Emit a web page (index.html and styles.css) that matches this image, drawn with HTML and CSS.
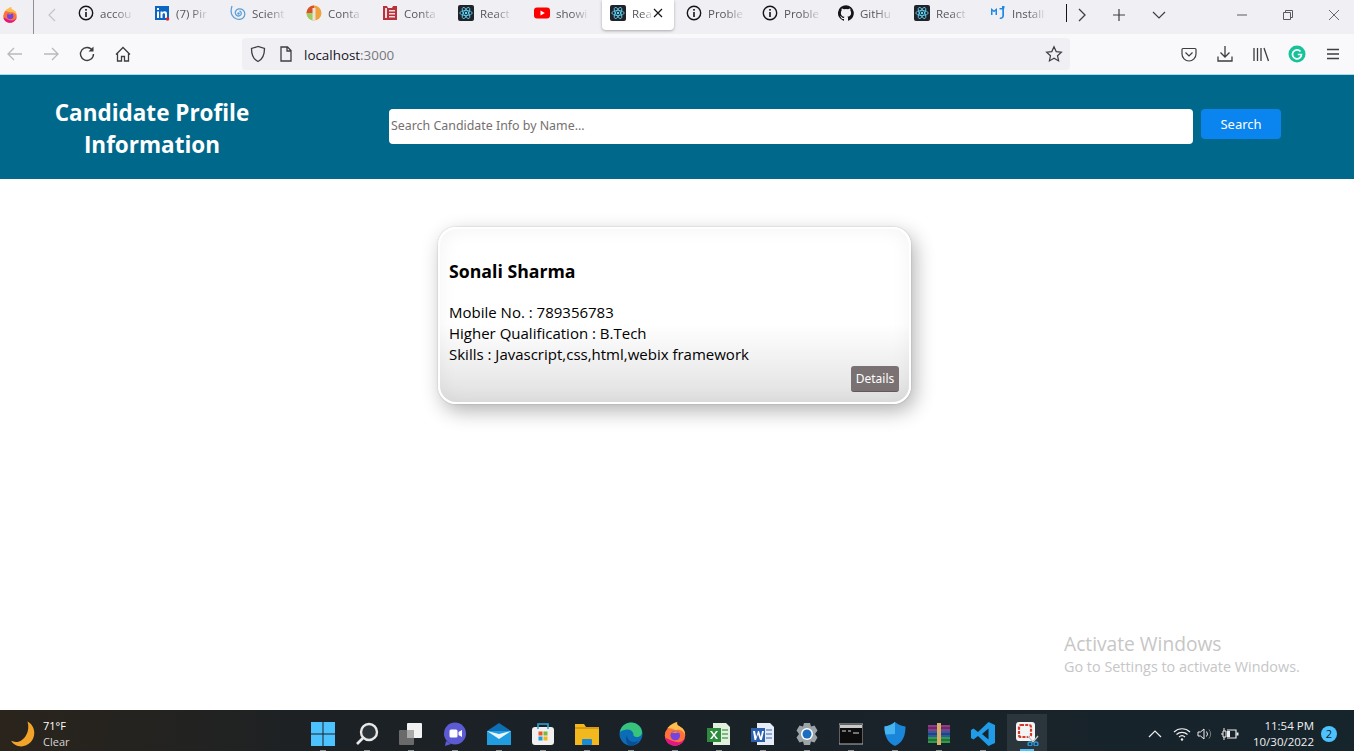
FILE: index.html
```html
<!DOCTYPE html>
<html lang="en">
<head>
<meta charset="UTF-8">
<meta name="viewport" content="width=device-width, initial-scale=1.0">
<title>Candidate Profile Information</title>
<link rel="stylesheet" href="styles.css">
</head>
<body>
<svg class="defs" width="0" height="0">
  <symbol id="i-info" viewBox="0 0 16 16"><circle cx="8" cy="8" r="6.7" fill="none" stroke="#15141a" stroke-width="1.4"/><rect x="7.2" y="7" width="1.6" height="5" fill="#15141a"/><rect x="7.2" y="4" width="1.6" height="1.7" fill="#15141a"/></symbol>
  <symbol id="i-react" viewBox="0 0 16 16"><rect width="16" height="16" rx="2" fill="#20232a"/><g fill="none" stroke="#61dafb" stroke-width=".8"><ellipse cx="8" cy="8" rx="6.2" ry="2.5"/><ellipse cx="8" cy="8" rx="6.2" ry="2.5" transform="rotate(60 8 8)"/><ellipse cx="8" cy="8" rx="6.2" ry="2.5" transform="rotate(120 8 8)"/></g><circle cx="8" cy="8" r="1.2" fill="#61dafb"/></symbol>
  <symbol id="i-firefox" viewBox="0 0 16 16"><circle cx="8" cy="9" r="6.8" fill="#ff7139"/><path d="M1.5 10.5C2 14 5 15.8 8 15.8c3.6 0 6.8-3 6.8-6.8 0 3-3 5-6 4.4-2.6-.4-4.6-2-7.3-2.9z" fill="#e31587"/><path d="M3 4C5 1.5 8 .2 9.5 0 9 1.500 10 2.500 12 3.500c2 1 2.800 3 2.800 5.500C14 6 11 4.500 8.500 5.500 6 4.500 4.500 4 3 4z" fill="#ffbd4f"/><circle cx="8.200" cy="9" r="3.200" fill="#7542e5"/><path d="M5.500 7.500c1-1.500 4-2 5.500 0-1-.6-2-.6-2.800 0-1-.4-2-.4-2.700 0z" fill="#ff980e"/></symbol>
  <symbol id="i-edge" viewBox="0 0 24 24"><circle cx="12" cy="12" r="11.500" fill="#0c6cb8"/><path d="M1 10C2 4 7 .5 12 .5c6 0 11 4.500 11 10 0 3-3 5-6 4.500-2-.3-3-1.500-2.500-3C14 9 11 7 7.500 7.500 4.500 8 2 9 1 10z" fill="#37c47a"/><path d="M8 13c0 4 3 7 7 7 2 0 4-.7 5-2-2 4-5 5.500-8 5.500-3 0-5-3-5-6 0-1.700.3-3.500 1-4.500z" fill="#0a4f96"/></symbol>
</svg>

<div class="tabstrip">
  <div class="ff-slot"><svg class="ic16"><use href="#i-firefox"/></svg></div>
  <div class="tab-back"><svg width="10" height="16" viewBox="0 0 10 16"><path d="M8 2 2 8l6 6" fill="none" stroke="#c4c4c8" stroke-width="1.2"/></svg></div>
  <div class="tab"><svg class="ic16"><use href="#i-info"/></svg><span class="tab-text">accou</span></div>
  <div class="tab"><svg class="ic16" viewBox="0 0 16 16"><rect x="1" y="1" width="14" height="14" fill="#0a66c2"/><rect x="3" y="6.500" width="2" height="6.500" fill="#fff"/><rect x="3" y="3" width="2" height="2" fill="#fff"/><path d="M6.500 6.500h2v1c.5-.8 1.300-1.200 2.200-1.200 1.800 0 2.300 1.200 2.300 3V13h-2V9.800c0-.9-.3-1.500-1.200-1.500S8.500 9 8.500 9.800V13h-2z" fill="#fff"/><circle cx="13.500" cy="14" r="1.800" fill="#e0272e"/></svg><span class="tab-text">(7) Pir</span></div>
  <div class="tab"><svg class="ic16" viewBox="0 0 16 16"><g fill="none" stroke="#5b9fd6" stroke-width="1.300"><path d="M2 1c-1 3-1.500 6 0 9 2 4 7 5.500 10.500 3.500 3-1.800 3-6.500.5-8.500C10.500 3 6.500 3.500 5.500 6.500 4.500 9.500 7.500 12 10 10.500c2-1.200 1.500-4-.5-4.500"/></g><circle cx="8.500" cy="8.500" r="1.200" fill="#5b9fd6"/></svg><span class="tab-text">Scient</span></div>
  <div class="tab"><svg class="ic16" viewBox="0 0 16 16"><circle cx="8" cy="8" r="7.500" fill="#f0a23c"/><path d="M8 8V.5A7.500 7.500 0 0 0 .5 8z" fill="#d9512c"/><path d="M8 8H.5A7.500 7.500 0 0 0 8 15.500z" fill="#9ccc65"/><rect x="6.500" y="3" width="3" height="12.500" fill="#e9e4d4"/></svg><span class="tab-text">Conta</span></div>
  <div class="tab"><svg class="ic16" viewBox="0 0 16 16"><path d="M1 1h4l1 2h4l1-2h4v14H1z" fill="#b8323c"/><g fill="#f3d9da"><rect x="3" y="3" width="2" height="10"/><rect x="7" y="5" width="6" height="1.500"/><rect x="7" y="8" width="6" height="1.500"/><rect x="7" y="11" width="6" height="1.500"/></g></svg><span class="tab-text">Conta</span></div>
  <div class="tab"><svg class="ic16"><use href="#i-react"/></svg><span class="tab-text">React</span></div>
  <div class="tab"><svg class="ic16" viewBox="0 0 16 16"><rect y="2.500" width="16" height="11" rx="3" fill="#f00"/><path d="M6.500 5.500v5l4.300-2.500z" fill="#fff"/></svg><span class="tab-text">showi</span></div>
  <div class="tab tab-active"><svg class="ic16"><use href="#i-react"/></svg><span class="tab-text">Rea</span><svg class="tab-close" width="10" height="10" viewBox="0 0 10 10"><path d="M1 1l8 8M9 1 1 9" stroke="#15141a" stroke-width="1.200"/></svg></div>
  <div class="tab"><svg class="ic16"><use href="#i-info"/></svg><span class="tab-text">Proble</span></div>
  <div class="tab"><svg class="ic16"><use href="#i-info"/></svg><span class="tab-text">Proble</span></div>
  <div class="tab"><svg class="ic16" viewBox="0 0 16 16"><path fill="#15141a" d="M8 .2a8 8 0 0 0-2.500 15.600c.4.100.5-.2.500-.4v-1.400c-2.200.5-2.700-1-2.700-1-.4-.9-.9-1.200-.9-1.200-.7-.5.100-.5.100-.5.800.100 1.200.8 1.200.8.700 1.200 1.900.9 2.300.7.100-.5.300-.9.500-1.100-1.800-.2-3.600-.9-3.600-4 0-.9.300-1.600.8-2.100-.1-.2-.4-1 .1-2.100 0 0 .7-.2 2.200.8a7.600 7.600 0 0 1 4 0c1.500-1 2.200-.8 2.200-.8.400 1.100.2 1.900.1 2.100.5.600.8 1.300.8 2.100 0 3.100-1.900 3.700-3.700 3.900.3.300.6.800.6 1.500v2.200c0 .2.100.5.600.4A8 8 0 0 0 8 .2z"/></svg><span class="tab-text">GitHu</span></div>
  <div class="tab"><svg class="ic16"><use href="#i-react"/></svg><span class="tab-text">React</span></div>
  <div class="tab"><svg class="ic16" viewBox="0 0 16 16"><path d="M1 3l3 2.500L7 3v7H5.500V6L4 7.200 2.500 6v4H1z M9.500 3h4.500v7.500c0 2.500-2 4-4.500 3.500l.5-1.500c1.300.2 2.300-.5 2.300-2V4.500H9.500z" fill="#1e88e5"/><rect x="12" y="1" width="2.500" height="2.500" fill="#1e88e5"/></svg><span class="tab-text">Install</span></div>
  <div class="tab-stub"></div>
  <div class="tab-tools">
    <svg width="12" height="16" viewBox="0 0 12 16"><path d="M3 2l6 6-6 6" fill="none" stroke="#3d3d42" stroke-width="1.300"/></svg>
    <svg width="14" height="14" viewBox="0 0 14 14"><path d="M7 1v12M1 7h12" stroke="#3d3d42" stroke-width="1.200"/></svg>
    <svg class="tab-list" width="14" height="10" viewBox="0 0 14 10"><path d="M1 2l6 6 6-6" fill="none" stroke="#3d3d42" stroke-width="1.200"/></svg>
  </div>
  <div class="win-controls">
    <svg width="12" height="12" viewBox="0 0 12 12"><path d="M1 6h10" stroke="#5a5a5e"/></svg>
    <svg width="12" height="12" viewBox="0 0 12 12"><path d="M1.500 3.500h7v7h-7zM3.500 3.500v-2h7v7h-2" fill="none" stroke="#5a5a5e"/></svg>
    <svg width="12" height="12" viewBox="0 0 12 12"><path d="M1 1l10 10M11 1 1 11" stroke="#5a5a5e" stroke-width=".9"/></svg>
  </div>
</div>

<div class="toolbar">
  <div class="nav-icons">
    <svg class="ic18" viewBox="0 0 18 18"><path d="M16 9H2M8 3 2 9l6 6" fill="none" stroke="#b9b9bd" stroke-width="1.300"/></svg>
    <svg class="ic18" viewBox="0 0 18 18"><path d="M2 9h14M10 3l6 6-6 6" fill="none" stroke="#b9b9bd" stroke-width="1.300"/></svg>
    <svg class="ic18" viewBox="0 0 18 18"><path d="M14.500 5.500A6.500 6.500 0 1 0 15.500 9" fill="none" stroke="#3d3d42" stroke-width="1.400"/><path d="M15.500 1.500v5h-5z" fill="#3d3d42"/></svg>
    <svg class="ic18" viewBox="0 0 18 18"><path d="M2 9.500 9 2.500l7 7M3.500 8.500V16h4v-4.500h3V16h4V8.500" fill="none" stroke="#3d3d42" stroke-width="1.300"/></svg>
  </div>
  <div class="urlbar">
    <svg class="ic18" viewBox="0 0 18 18"><path d="M9 1.500 2.500 3.500c0 6 1 10.500 6.500 13 5.500-2.500 6.500-7 6.500-13z" fill="none" stroke="#3d3d42" stroke-width="1.300"/></svg>
    <svg class="page-ic" width="14" height="16" viewBox="0 0 14 16"><path d="M2 1h6.500L12 4.500V15H2zM8 1v4h4" fill="none" stroke="#3d3d42" stroke-width="1.300"/></svg>
    <span class="url-text">localhost<span class="url-port">:3000</span></span>
    <svg class="ic18 url-star" viewBox="0 0 18 18"><path d="M9 1.800l2.200 4.800 5.200.6-3.900 3.500 1.100 5.200L9 13.300l-4.600 2.600 1.100-5.200-3.900-3.500 5.200-.6z" fill="none" stroke="#3d3d42" stroke-width="1.200"/></svg>
  </div>
  <div class="nav-icons right-icons">
    <svg class="ic18" viewBox="0 0 18 18"><path d="M3 3.500h12c.6 0 1 .4 1 1v4.500a7 7 0 0 1-14 0V4.500c0-.6.400-1 1-1z" fill="none" stroke="#3d3d42" stroke-width="1.200"/><path d="M5.500 7.500 9 11l3.500-3.500" fill="none" stroke="#3d3d42" stroke-width="1.200"/></svg>
    <svg class="ic18" viewBox="0 0 18 18"><path d="M9 1v10.500M4.500 7.500 9 12l4.500-4.500M2 11.500V16h14v-4.500" fill="none" stroke="#3d3d42" stroke-width="1.300"/></svg>
    <svg class="ic18" viewBox="0 0 18 18"><path d="M2 3v13M5.500 3v13M9 3v13M12 3l4.500 13" fill="none" stroke="#3d3d42" stroke-width="1.300"/></svg>
    <svg class="ic18" viewBox="0 0 18 18"><circle cx="9" cy="9" r="8.500" fill="#15c39a"/><path d="M12.500 6.500A4.500 4.500 0 1 0 13.500 9.500H9.800" fill="none" stroke="#fff" stroke-width="1.700"/></svg>
    <svg class="ic18" viewBox="0 0 18 18"><path d="M3 4.500h12M3 9h12M3 13.500h12" stroke="#3d3d42" stroke-width="1.300"/></svg>
  </div>
</div>

<header class="page-header">
  <h1 class="page-title">Candidate Profile Information</h1>
  <input class="search-input" type="text" placeholder="Search Candidate Info by Name...">
  <button class="search-btn">Search</button>
</header>

<main class="content">
  <div class="card">
    <h3 class="card-name">Sonali Sharma</h3>
    <div class="card-line">Mobile No. : 789356783</div>
    <div class="card-line">Higher Qualification : B.Tech</div>
    <div class="card-line">Skills : Javascript,css,html,webix framework</div>
    <div class="card-actions"><button class="details-btn">Details</button></div>
  </div>
</main>

<div class="watermark">
  <div class="wm-title">Activate Windows</div>
  <div class="wm-sub">Go to Settings to activate Windows.</div>
</div>

<footer class="taskbar">
  <div class="weather">
    <svg width="26" height="26" viewBox="1 1 22 23"><path d="M16 1.500c3 1.500 6 5 6 10 0 7-5.500 12-11.500 12-4 0-7.500-2-9-5 2 1 4 1.300 6.500.8C14 17.800 18.500 9.500 16 1.500z" fill="#f2a32a"/></svg>
    <div class="weather-text"><div>71°F</div><div class="weather-sub">Clear</div></div>
  </div>
  <div class="task-icons">
    <div class="task-icon"><svg class="ic24" viewBox="0 0 24 24"><g fill="#4cc2ff"><rect x="0" y="0" width="11.500" height="11.500"/><rect x="12.500" y="0" width="11.500" height="11.500"/><rect x="0" y="12.500" width="11.500" height="11.500"/><rect x="12.500" y="12.500" width="11.500" height="11.500"/></g></svg></div>
    <div class="task-icon"><svg class="ic24" viewBox="0 0 24 24"><circle cx="14" cy="10" r="8" fill="#2c3338" stroke="#e8e8e8" stroke-width="2.400"/><path d="M8 16l-6 6" stroke="#e8e8e8" stroke-width="2.600"/></svg></div>
    <div class="task-icon"><svg class="ic24" viewBox="0 0 24 24"><rect x="0" y="8" width="15" height="15" rx="1" fill="#6a6a6a"/><rect x="8" y="1" width="15" height="15" rx="1" fill="#f2f2f2"/><rect x="8" y="8" width="7" height="8" fill="#a9a9a9"/></svg></div>
    <div class="task-icon"><svg class="ic24" viewBox="0 0 24 24"><circle cx="12" cy="11.500" r="11" fill="#5d5bd4"/><path d="M3 19l-1 5 6-2z" fill="#5d5bd4"/><rect x="6.500" y="7.500" width="8" height="8" rx="1.500" fill="#fff"/><path d="M15.500 10l3.500-2v7l-3.500-2z" fill="#fff"/></svg></div>
    <div class="task-icon"><svg class="ic24" viewBox="0 0 24 24"><path d="M0 9 12 1l12 8v14H0z" fill="#0f6fb5"/><path d="M0 9h24v14H0z" fill="#1f9de0"/><path d="M0 9l12 8 12-8-12 3z" fill="#e9f5fc"/></svg></div>
    <div class="task-icon"><svg class="ic24" viewBox="0 0 24 24"><rect x="1" y="5" width="22" height="18" rx="3" fill="#f2f0ee"/><path d="M7 7V2h10v5" fill="none" stroke="#2fa6d9" stroke-width="1.600"/><rect x="7.500" y="9.500" width="4" height="4" fill="#e8562a"/><rect x="12.500" y="9.500" width="4" height="4" fill="#7db83a"/><rect x="7.500" y="14.500" width="4" height="4" fill="#1f9de0"/><rect x="12.500" y="14.500" width="4" height="4" fill="#f5b51e"/></svg></div>
    <div class="task-icon"><svg class="ic24" viewBox="0 0 24 24"><path d="M0 2h9l2 3h13v18H0z" fill="#f2b91f"/><rect x="0" y="5" width="24" height="2" fill="#d99a12"/><rect x="7" y="17" width="10" height="6" rx="1" fill="#1b8ad3"/></svg></div>
    <div class="task-icon"><svg class="ic24"><use href="#i-edge"/></svg></div>
    <div class="task-icon"><svg class="ic24" viewBox="0 0 16 16"><use href="#i-firefox" width="16" height="16"/></svg></div>
    <div class="task-icon"><svg class="ic24" viewBox="0 0 24 24"><path d="M6 1h13l4 4v18H6z" fill="#e3efdd"/><rect x="0" y="6" width="14" height="14" fill="#2e8b3e"/><path d="M3 9l2 0 2 3 2-3h2l-3 4 3 4H9l-2-3-2 3H3l3-4z" fill="#fff"/><path d="M15 8h6M15 12h6M15 16h6" stroke="#5aa867" stroke-width="1.600"/></svg></div>
    <div class="task-icon"><svg class="ic24" viewBox="0 0 24 24"><path d="M6 1h13l4 4v18H6z" fill="#e5ecf7"/><rect x="0" y="6" width="14" height="14" fill="#2a5fb0"/><path d="M2 9h2l1.200 6L7 9h1l1.800 6L11 9h2l-2.200 9H9l-2-6-2 6H3.500z" fill="#fff"/><path d="M15 8h6M15 12h6M15 16h6" stroke="#6d92cc" stroke-width="1.600"/></svg></div>
    <div class="task-icon"><svg class="ic24" viewBox="0 0 24 24"><path d="M9 1h6l1 3.500 3.500-1 3 5-2.500 3.500 2.500 3.500-3 5-3.500-1L15 23H9l-1-3.500-3.500 1-3-5L4 12 1.500 8.500l3-5 3.500 1z" fill="#9ba3a8"/><circle cx="12" cy="12" r="6" fill="#fff"/><circle cx="12" cy="12" r="4.500" fill="#1a6fc0"/></svg></div>
    <div class="task-icon"><svg class="ic24" viewBox="0 0 24 24"><rect y="2" width="24" height="20" fill="#0c0c0c" stroke="#b5b5b5"/><rect x="1" y="3" width="22" height="3" fill="#c9c9c9"/><path d="M3 9h4M9 9h3M14 11h6" stroke="#d8d8d8" stroke-width="1.200"/></svg></div>
    <div class="task-icon"><svg class="ic24" viewBox="0 0 24 24"><path d="M12 0C8 3 5 4 1.500 4.500c0 9 2.500 16 10.500 19.500 8-3.500 10.500-10.500 10.500-19.500C19 4 16 3 12 0z" fill="#1a86d9"/><path d="M12 0C8 3 5 4 1.500 4.500c0 3 .3 5.500 1 8L12 12z" fill="#46b4ef"/></svg></div>
    <div class="task-icon"><svg class="ic24" viewBox="0 0 24 24"><rect x="1" y="3" width="22" height="6" fill="#8f3a86"/><rect x="1" y="9" width="22" height="6" fill="#2c5aa6"/><rect x="1" y="15" width="22" height="6" fill="#2f9a4a"/><path d="M1 6h22M1 12h22M1 18h22" stroke="#111" stroke-width=".6"/><rect x="10" y="1" width="4" height="22" fill="#d8b06a"/></svg></div>
    <div class="task-icon"><svg class="ic24" viewBox="0 0 24 24"><path d="M17.500 0 24 3v18l-6.500 3L7 14l-4.500 3.500L0 16v-8l2.500-1.500L7 10zm0 6.500L11 12l6.500 5.500z" fill="#1f9be8"/></svg></div>
    <div class="task-icon task-active"><svg class="ic24" viewBox="0 0 24 24"><rect x="1" y="0" width="19" height="19" rx="3" fill="#f4f4f4"/><rect x="4" y="3" width="12" height="12" rx="2" fill="none" stroke="#d2392c" stroke-width="2.200" stroke-dasharray="3 1.200"/><path d="M13 14l5 6M23 14l-5 6" stroke="#c8c8c8" stroke-width="1.300"/><circle cx="15" cy="22" r="2" fill="none" stroke="#2a9ae0" stroke-width="1.300"/><circle cx="21" cy="22" r="2" fill="none" stroke="#2a9ae0" stroke-width="1.300"/></svg></div>
  </div>
  <div class="tray">
    <svg width="14" height="10" viewBox="0 0 14 10"><path d="M1 8l6-6 6 6" fill="none" stroke="#eee" stroke-width="1.200"/></svg>
    <svg class="tray-wifi" width="18" height="14" viewBox="0 0 18 14"><path d="M1 5a11.500 11.500 0 0 1 16 0M3.500 7.500a8 8 0 0 1 11 0M6 10a4.500 4.500 0 0 1 6 0" fill="none" stroke="#eee" stroke-width="1.200"/><circle cx="9" cy="12.500" r="1.200" fill="#eee"/></svg>
    <svg class="tray-sound" width="16" height="14" viewBox="0 0 16 14"><path d="M1 5h2.500L7 2v10L3.500 9H1z" fill="none" stroke="#eee"/><path d="M9.500 4.500a4 4 0 0 1 0 5" fill="none" stroke="#eee"/><path d="M12 2.500a7 7 0 0 1 0 9" fill="none" stroke="#777"/></svg>
    <svg class="tray-batt" width="18" height="14" viewBox="0 0 18 14"><path d="M6 3h9v8H6" fill="none" stroke="#eee" stroke-width="1.200"/><rect x="15.500" y="5.500" width="2" height="3" fill="#eee"/><rect x="6" y="4" width="3" height="6" fill="#eee"/><path d="M0 7h2M2 4h3v6H2zM3 1v3M3 10v3" fill="none" stroke="#eee"/></svg>
    <div class="clock"><div>11:54 PM</div><div>10/30/2022</div></div>
    <div class="badge">2</div>
  </div>
</footer>
</body>
</html>
```
FILE: styles.css
```css
html, body {
  height: 100%;
}
body {
  margin: 0;
  font-family: "Open Sans", "Noto Sans", sans-serif;
  background-color: #fff;
  display: flex;
  flex-direction: column;
  overflow: hidden;
}
.defs {
  position: absolute;
}
.ic16 {
  width: 16px;
  height: 16px;
  flex: none;
}
.ic18 {
  width: 18px;
  height: 18px;
  flex: none;
}
.ic24 {
  width: 24px;
  height: 24px;
  flex: none;
}

/* browser tabs */
.tabstrip {
  height: 34px;
  background-color: #f0f0f4;
  display: flex;
  align-items: stretch;
  flex: none;
}
.ff-slot {
  width: 34px;
  border-right: 1px solid #8f8f94;
  display: flex;
  align-items: center;
  padding-left: 2px;
  padding-bottom: 4px;
  box-sizing: border-box;
}
.tab-back {
  width: 36px;
  display: flex;
  align-items: center;
  padding-left: 13px;
  padding-bottom: 4px;
  box-sizing: border-box;
}
.tab {
  width: 76px;
  height: 30px;
  box-sizing: border-box;
  display: flex;
  align-items: center;
  padding-left: 8px;
  padding-bottom: 4px;
  gap: 6px;
  position: relative;
}
.tab-text {
  font-size: 11.5px;
  color: #55555a;
  white-space: nowrap;
  -webkit-mask-image: linear-gradient(90deg, #000 50%, rgba(0, 0, 0, .15));
  mask-image: linear-gradient(90deg, #000 50%, rgba(0, 0, 0, .15));
}
.tab-active {
  width: 72px;
  margin-right: 4px;
  background-color: #fff;
  border-radius: 0 0 4px 4px;
  box-shadow: 0 1px 3px rgba(0, 0, 0, .3);
}
.tab-close {
  position: absolute;
  left: 51px;
  top: 8px;
}
.tab-stub {
  width: 8px;
  height: 18px;
  margin-top: 4px;
  border-right: 1px solid #15141a;
}
.tab-tools {
  display: flex;
  align-items: center;
  padding-left: 9px;
  padding-bottom: 4px;
  gap: 24px;
}
.tab-list {
  margin-left: 2px;
}
.win-controls {
  margin-left: 70px;
  padding-bottom: 4px;
  display: flex;
  align-items: center;
  gap: 34px;
}

/* address bar row */
.toolbar {
  height: 41px;
  box-sizing: border-box;
  background-color: #f9f9fb;
  border-bottom: 1px solid #a6dcee;
  display: flex;
  align-items: center;
  padding-left: 6px;
  flex: none;
}
.nav-icons {
  display: flex;
  align-items: center;
  gap: 18px;
}
.urlbar {
  width: 828px;
  height: 32px;
  margin-left: 110px;
  border-radius: 4px;
  background-color: #f0f0f4;
  display: flex;
  align-items: center;
  padding-left: 7px;
  box-sizing: border-box;
}
.page-ic {
  margin-left: 12px;
}
.url-text {
  margin: 1px 0 0 11px;
  font-size: 13.4px;
  color: #15141a;
}
.url-port {
  color: #77777c;
}
.url-star {
  margin-left: auto;
  margin-right: 7px;
}
.right-icons {
  margin-left: 110px;
}

/* page */
.page-header {
  height: 104px;
  background-color: #00688b;
  display: flex;
  align-items: center;
  flex: none;
}
.page-title {
  width: 304px;
  margin: 4px 0 0;
  padding: 0 40px;
  box-sizing: border-box;
  text-align: center;
  color: #fff;
  font-size: 22.5px;
  line-height: 32px;
  font-weight: 700;
}
.search-input {
  width: 804px;
  height: 35px;
  margin: 0 0 1px 85px;
  padding: 0 2px 2px;
  box-sizing: border-box;
  border: none;
  border-radius: 4px;
  background-color: #fff;
  font-family: "Noto Sans", sans-serif;
  font-size: 12.4px;
}
.search-input::placeholder {
  color: #757070;
}
.search-btn {
  width: 80px;
  height: 30px;
  margin: 0 0 6px 8px;
  border: none;
  border-radius: 4px;
  background-color: #0a84ee;
  color: #fff;
  font-family: "Noto Sans", sans-serif;
  font-size: 13px;
}
.content {
  flex: 1;
  display: flex;
  justify-content: center;
  align-items: flex-start;
  padding-top: 48px;
}
.card {
  width: 473px;
  height: 177px;
  box-sizing: border-box;
  margin-right: 5px;
  border: 2px solid #fff;
  border-radius: 18px;
  padding: 0 10px 0 9px;
  background: linear-gradient(180deg, #fff 55%, #e0e0e0 100%);
  box-shadow: 4px 7px 20px rgba(0, 0, 0, .3), 0 0 2px rgba(0, 0, 0, .2), inset 0 0 20px rgba(0, 0, 0, .05);
  display: flex;
  flex-direction: column;
}
.card-name {
  margin: 31px 0 20px;
  font-size: 17.7px;
  line-height: 22px;
  color: #000;
}
.card-line {
  font-size: 15px;
  line-height: 21px;
  color: #000;
}
.card-actions {
  display: flex;
  justify-content: flex-end;
  margin-top: 1px;
}
.details-btn {
  width: 48px;
  height: 26px;
  padding: 0;
  border: none;
  border-radius: 3px;
  background-color: #7a7272;
  border-bottom: 1px solid #615a5a;
  color: #fff;
  font-family: "Noto Sans", sans-serif;
  font-size: 12px;
}

/* windows stuff lying over the page */
.watermark {
  position: absolute;
  left: 1064px;
  top: 631px;
  color: #c6c6c6;
}
.wm-title {
  font-size: 19.2px;
  line-height: 25px;
}
.wm-sub {
  font-size: 14.4px;
  line-height: 20px;
  margin-top: 1px;
}
.taskbar {
  height: 41px;
  flex: none;
  display: flex;
  align-items: center;
  background: linear-gradient(90deg, #2a241c, #1c2125 25%, #16242c);
  color: #fff;
}
.weather {
  width: 301px;
  flex: none;
  display: flex;
  align-items: center;
  gap: 7px;
  padding: 7px 0 0 10px;
  box-sizing: border-box;
  font-size: 11px;
  line-height: 16px;
}
.weather-sub {
  color: #d5d5d5;
}
.task-icons {
  display: flex;
}
.task-icon {
  width: 44px;
  height: 41px;
  padding-top: 7px;
  box-sizing: border-box;
  display: flex;
  align-items: center;
  justify-content: center;
  position: relative;
}
.task-icon::after {
  content: "";
  position: absolute;
  left: 19px;
  bottom: 0;
  width: 6px;
  height: 1px;
  background-color: #8a8f92;
}
.task-active {
  background: linear-gradient(90deg, transparent 2px, #2b363c 2px, #2b363c 42px, transparent 42px);
  margin-top: 4px;
  height: 37px;
  padding-top: 3px;
}
.task-active::after {
  left: 15px;
  width: 14px;
  height: 2px;
  background-color: #4cc2ff;
}
.tray {
  margin-left: 99px;
  padding-top: 7px;
  display: flex;
  align-items: center;
  font-size: 11.5px;
}
.tray-wifi {
  margin-left: 11px;
}
.tray-sound {
  margin-left: 6px;
}
.tray-batt {
  margin-left: 8px;
}
.clock {
  width: 75px;
  text-align: right;
  line-height: 16px;
  color: #f0f0f0;
}
.badge {
  width: 16px;
  height: 16px;
  margin-left: 7px;
  border-radius: 50%;
  background-color: #4cc2ff;
  color: #10202a;
  font-size: 11px;
  line-height: 16px;
  text-align: center;
}
```
